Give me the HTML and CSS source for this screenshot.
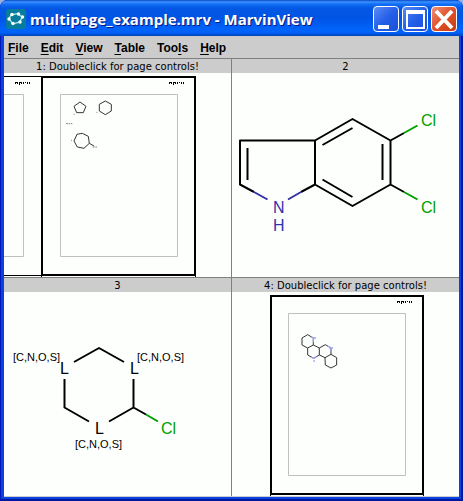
FILE: index.html
```html
<!DOCTYPE html>
<html lang="en">
<head>
<meta charset="utf-8">
<title>multipage_example.mrv - MarvinView</title>
<link rel="stylesheet" href="styles.css">
</head>
<body>
<div class="window">
  <header class="titlebar">
    <svg class="app-icon" viewBox="0 0 20 20" aria-hidden="true">
      <rect width="20" height="20" rx="3" fill="#087c9c"/>
      <path d="M3 10 5 6 12 4.500 16 8 14 13 7 15Z" fill="none" stroke="#9fdce6" stroke-width="1.500"/>
      <g fill="#fff"><circle cx="3" cy="10" r="1.700"/><circle cx="6" cy="5.500" r="1.700"/><circle cx="12.500" cy="5" r="1.700"/><circle cx="16.500" cy="8" r="1.700"/><circle cx="14" cy="13" r="1.700"/><circle cx="7" cy="14.500" r="1.700"/></g>
    </svg>
    <h1 class="title">multipage_example.mrv - MarvinView</h1>
    <div class="controls">
      <button class="control" type="button" aria-label="Minimize"><svg viewBox="0 0 24 24"><path d="M4 18h11v4H4z" fill="#fff"/></svg></button>
      <button class="control" type="button" aria-label="Maximize"><svg viewBox="0 0 24 24"><path d="M3 3h19v19H3zM5 7v13h15V7z" fill="#fff" fill-rule="evenodd"/></svg></button>
      <button class="control close" type="button" aria-label="Close"><svg viewBox="0 0 24 24"><path d="M4 4 20 21M20 4 4 21" stroke="#fff" stroke-width="4"/></svg></button>
    </div>
  </header>
  <nav class="menubar">
    <button class="menu" type="button"><u>F</u>ile</button>
    <button class="menu" type="button"><u>E</u>dit</button>
    <button class="menu" type="button"><u>V</u>iew</button>
    <button class="menu" type="button"><u>T</u>able</button>
    <button class="menu" type="button">Too<u>l</u>s</button>
    <button class="menu" type="button"><u>H</u>elp</button>
  </nav>
  <main class="grid">
    <section class="cell">
      <h2 class="caption">1: Doubleclick for page controls!</h2>
      <svg class="canvas" viewBox="4 73 227 204">
        <g fill="none">
          <path class="outline" d="M42 77H195V275H42Z"/>
          <path class="edge" d="M4 76.500H41M4 275.500H41M41.500 275V277M195.500 275V277"/>
          <path class="margin" d="M60.500 94.500H177.500V256.500H60.500ZM4 94.500H23.500V256.500H4"/>
        </g>
        <path id="label" class="edge" fill="none" d="M15.500 84V82M15 82.500H18M17.500 82V84M19.500 82V85M20 82.500H21M21.500 82V84M23.500 82V84M25 82.500H26M27.500 82V84M27 83.500H28M29.500 82V84"/>
        <use href="#label" x="154"/>
        <g class="thumb" transform="translate(0 60) scale(.3333)">
          <path d="M240 126 258 139 250 158H230L222 139ZM316 123 334 133V153L316 164 298 153V133ZM247 220 265 229 268 250 252 265 232 261 222 243 231 223ZM268 250 282 258"/>
          <path class="faint" d="M198 191H204M206 191H211M213 191H217M278 261H284M286 261H291M221 163H224M289 157H292M213 241H216"/>
        </g>
      </svg>
    </section>
    <section class="cell">
      <h2 class="caption">2</h2>
      <svg class="canvas" viewBox="232 73 227 204">
        <g class="bond">
          <path d="M315 140.500H240V184.500L254 192M301 192 315 184.500V140.500L352.500 119 390.500 140.500V184.500L352.500 206 315 184.500M247.500 148V180M322.500 145 352.500 128M382.500 144V180M322.500 179.500 352.500 197M390.500 140.500 404 133M390.500 184.500 404 192"/>
          <path class="chlorine" d="M404 133 417.500 125.500M404 192 417.500 199.500"/>
          <path class="nitrogen" d="M254 192 267.500 199.500M301 192 288 199.500"/>
        </g>
        <g class="atom">
          <text class="cl" x="421" y="126">Cl</text>
          <text class="cl" x="421" y="213">Cl</text>
          <text class="n" x="273" y="213">N</text>
          <text class="n" x="273" y="231">H</text>
        </g>
      </svg>
    </section>
    <section class="cell">
      <h2 class="caption">3</h2>
      <svg class="canvas" viewBox="4 292 227 204">
        <g class="bond">
          <path d="M74 362 99 348 124 362M64.500 379V407.500L89 421.500M109 421.500 133.500 407.500V379M133.500 407.500 146 414.500"/>
          <path class="chlorine" d="M146 414.500 158 421.500"/>
        </g>
        <g class="atom">
          <text x="60" y="374">L</text>
          <text x="130" y="374">L</text>
          <text x="95" y="434">L</text>
          <text class="cl" x="161" y="434">Cl</text>
        </g>
        <g class="list">
          <text x="13" y="361">[C,N,O,S]</text>
          <text x="137" y="361">[C,N,O,S]</text>
          <text x="75" y="448">[C,N,O,S]</text>
        </g>
      </svg>
    </section>
    <section class="cell">
      <h2 class="caption">4: Doubleclick for page controls!</h2>
      <svg class="canvas" viewBox="232 292 227 204">
        <g fill="none">
          <path class="outline" d="M271 296H423V494H271Z"/>
          <path class="edge" d="M270.500 494V496M423.500 494V496"/>
          <path class="margin" d="M288.500 313.500H405.500V475.500H288.500Z"/>
        </g>
        <use href="#label" x="382" y="219"/>
        <g class="thumb" transform="translate(260 275) scale(.3333)">
          <path d="M160 210 143 219 126 210V189L143 179 160 189V210L178 219V240L161 250 143 240V219M178 219 196 209 213 219V238L195 248 178 240M213 238 230 248V270L213 279 196 270 195 248"/>
          <path class="blue" d="M153 185 160 189V202M158 189H168M203 213 213 219V230M208 219H219M152 246 161 250 170 245M158 249H165M160 258H165"/>
        </g>
      </svg>
    </section>
  </main>
</div>
</body>
</html>
```
FILE: styles.css
```css
* {
  box-sizing: border-box;
}

body {
  margin: 0;
  background: #9aaee6;
  color: #000;
  font-family: "Liberation Sans", Arial, sans-serif;
}

.window {
  display: flex;
  flex-direction: column;
  min-height: 100vh;
  padding: 0 4px 4px;
  border-radius: 8px 8px 0 0;
  background: #0843e0;
  box-shadow: inset 1px 0 #0018b8, inset -2px 0 #0018a0, inset 0 -2px #0018a0;
}

.titlebar {
  display: flex;
  align-items: center;
  height: 36px;
  margin: 0 -4px;
  padding: 2px 6px 0;
  border-radius: 8px 8px 0 0;
  background: linear-gradient(#0848c8 0, #3c94ff 2px, #1470f8 4px, #0458e4 8px, #0054e4 18px, #0064fc 30px, #0060f4 33px, #0040b8 36px);
}

.app-icon {
  flex: none;
  width: 20px;
  height: 20px;
}

.title {
  flex: 1;
  margin: 0 0 0 4px;
  color: #fff;
  font: bold 15px/22px "Open Sans", sans-serif;
  text-shadow: 1px 1px #0a1883;
  white-space: nowrap;
}

.controls {
  display: flex;
  gap: 3px;
}

.control {
  width: 26px;
  height: 26px;
  padding: 0;
  border: 1px solid #fff;
  border-radius: 4px;
  background: linear-gradient(135deg, #5c8cf4, #2460e8 50%, #1c50d8);
}

.control svg {
  display: block;
  width: 24px;
  height: 24px;
}

.close {
  background: linear-gradient(135deg, #f09078, #e05028 50%, #c83c10);
}

.menubar {
  display: flex;
  gap: 12px;
  height: 22px;
  padding: 0 4px;
  background: #ccc;
}

.menu {
  padding: 0;
  border: 0;
  background: none;
  color: #000;
  font: bold 12px/24px "Liberation Sans", Arial, sans-serif;
}

.menu u {
  text-underline-offset: 2px;
}

.grid {
  display: grid;
  flex: 1;
  grid-template-columns: 1fr 1fr;
  grid-auto-rows: 1fr;
  column-gap: 1px;
  border-bottom: 1px solid #ccc;
  background: #808080;
}

.cell {
  display: flex;
  flex-direction: column;
  min-width: 0;
  border-top: 1px solid #808080;
  background: #fdfffc;
}

.caption {
  margin: 0;
  background: #ccc;
  font: 10px/15px "DejaVu Sans", sans-serif;
  height: 14px;
  text-align: center;
  white-space: nowrap;
}

.canvas {
  display: block;
  flex: 1;
  width: 100%;
  min-height: 0;
}

.outline {
  stroke: #000;
  stroke-width: 2;
}

.edge {
  stroke: #000;
}

.margin {
  stroke: #c0c0c0;
}

.thumb path {
  fill: none;
  stroke: #333;
  stroke-width: 3;
}

.thumb .faint {
  stroke: #888;
}

.thumb .blue {
  stroke: #a0a0ec;
  stroke-width: 4;
}

.bond path {
  fill: none;
  stroke: #000;
  stroke-width: 2;
  stroke-linejoin: round;
}

.bond .chlorine {
  stroke: #00a000;
}

.bond .nitrogen {
  stroke: #3030a8;
}

.atom {
  font-size: 16px;
}

.cl {
  fill: #00a000;
}

.n {
  fill: #3030a8;
}

.list {
  font-size: 11px;
}
```
